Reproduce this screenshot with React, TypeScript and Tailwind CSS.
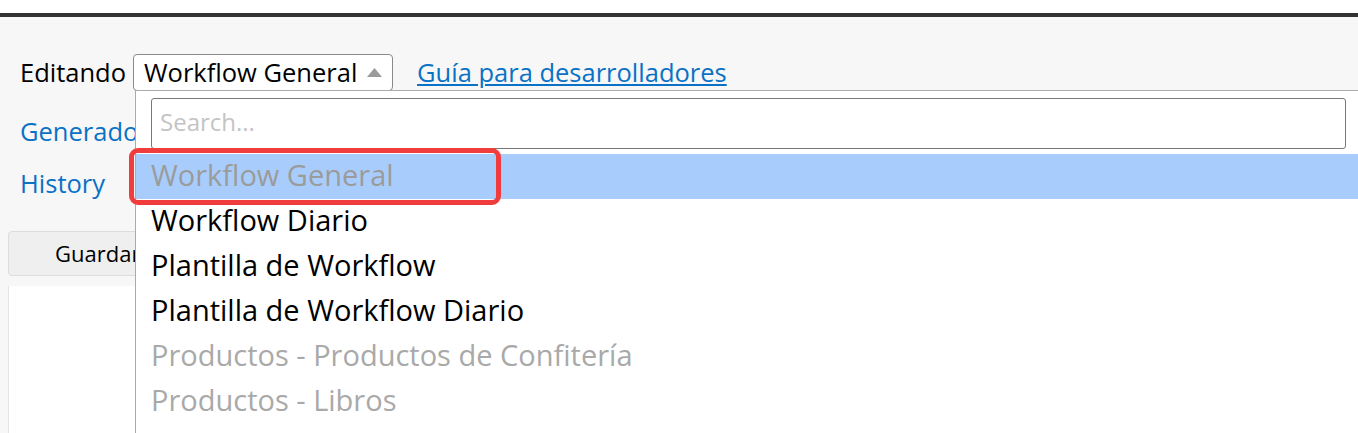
import React from "react";

const options = [
  { label: "Workflow General", disabled: true, active: true },
  { label: "Workflow Diario" },
  { label: "Plantilla de Workflow" },
  { label: "Plantilla de Workflow Diario" },
  { label: "Productos - Productos de Confitería", disabled: true },
  { label: "Productos - Libros", disabled: true },
];

const App = () => {
  return (
    <div
      className="h-[433px] w-[1358px] overflow-hidden bg-white"
      style={{ fontFamily: '"Open Sans", "Noto Sans", sans-serif' }}
    >
      <div className="h-[13px] bg-white" />
      <div className="h-[4px] bg-[#333]" />
      <div className="relative h-[416px] bg-[#f7f7f7]">
        <div className="flex items-center pl-[20px] pt-[36px] text-[25.5px]">
          <span className="text-black">Editando</span>
          <div className="ml-[7px] flex h-[37px] w-[260px] items-center justify-between rounded-[4px] border border-[#8a8a8a] bg-white pl-[10px] pr-[10px] text-[25.5px] text-black">
            <span>Workflow General</span>
            <svg width="15" height="9" viewBox="0 0 15 9">
              <path d="M7.5 0 L15 9 L0 9 Z" fill="#9a9a9a" />
            </svg>
          </div>
          <a className="ml-[24px] text-[#0a72c6] underline" href="#">
            Guía para desarrolladores
          </a>
        </div>
        <div className="pl-[20px] pt-[20px] text-[25.5px] text-[#0a72c6]">
          <div className="leading-[40px]">Generador</div>
          <div className="mt-[12px] leading-[40px]">History</div>
        </div>
        <div className="ml-[8px] mt-[28px] flex h-[45px] w-[200px] items-center rounded-[4px] border border-[#dcdcdc] bg-[#efefef] pl-[46px] text-[22px] text-black">
          Guardar
        </div>
        <div className="ml-[8px] mt-[10px] h-[200px] w-[200px] border-l border-[#e5e5e5] bg-white" />

        <div className="absolute left-[135px] top-[73px] h-[360px] w-[1240px] border-l border-t border-[#aaa] bg-white">
          <div className="px-[15px] pt-[7px] pb-[5px]">
            <div className="flex h-[51px] w-[1195px] items-center rounded-[3px] border border-[#777] pb-[3px] pl-[8px] text-[24px] text-[#c4c4c4]">
              Search...
            </div>
          </div>
          {options.map((o) => (
            <div
              key={o.label}
              className={`flex h-[45px] items-center pb-[3px] pl-[15px] text-[29px] ${
                o.active ? "bg-[#a8cdfc] text-[#9b9b9b]" : o.disabled ? "text-[#a9a9a9]" : "text-black"
              }`}
            >
              {o.label}
            </div>
          ))}
        </div>
        <div className="absolute left-[129px] top-[131px] h-[57px] w-[372px] rounded-[9px] border-[5px] border-[#f03c3c]" />
      </div>
    </div>
  );
};

export default App;
